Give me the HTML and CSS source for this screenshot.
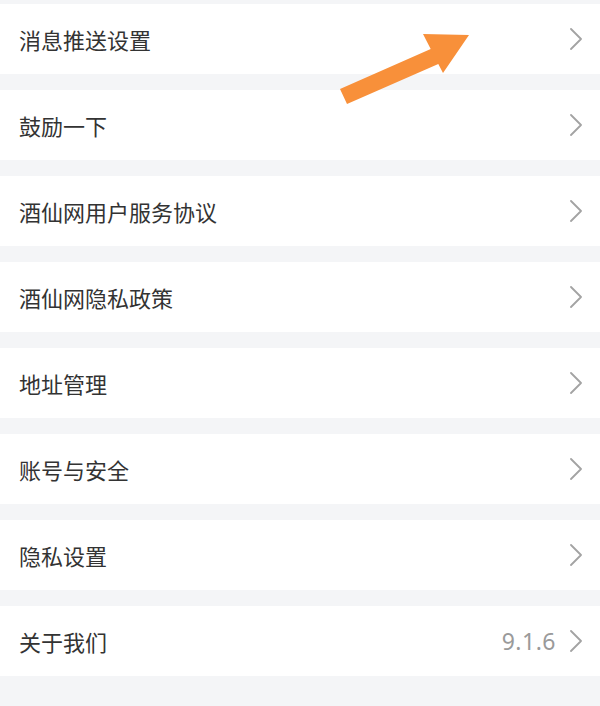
FILE: index.html
```html
<!DOCTYPE html>
<html lang="zh-CN">
<head>
<meta charset="utf-8">
<title>设置</title>
<link rel="stylesheet" href="styles.css">
</head>
<body>
<div class="page">
  <ul class="menu">
    <li class="row"><span class="label">消息推送设置</span><span class="right"><svg class="chev" viewBox="0 0 12 22"><polyline points="1,1 11,11 1,21"/></svg></span></li>
    <li class="row"><span class="label">鼓励一下</span><span class="right"><svg class="chev" viewBox="0 0 12 22"><polyline points="1,1 11,11 1,21"/></svg></span></li>
    <li class="row"><span class="label">酒仙网用户服务协议</span><span class="right"><svg class="chev" viewBox="0 0 12 22"><polyline points="1,1 11,11 1,21"/></svg></span></li>
    <li class="row"><span class="label">酒仙网隐私政策</span><span class="right"><svg class="chev" viewBox="0 0 12 22"><polyline points="1,1 11,11 1,21"/></svg></span></li>
    <li class="row"><span class="label">地址管理</span><span class="right"><svg class="chev" viewBox="0 0 12 22"><polyline points="1,1 11,11 1,21"/></svg></span></li>
    <li class="row"><span class="label">账号与安全</span><span class="right"><svg class="chev" viewBox="0 0 12 22"><polyline points="1,1 11,11 1,21"/></svg></span></li>
    <li class="row"><span class="label">隐私设置</span><span class="right"><svg class="chev" viewBox="0 0 12 22"><polyline points="1,1 11,11 1,21"/></svg></span></li>
    <li class="row"><span class="label">关于我们</span><span class="right"><span class="version">9.1.6</span><svg class="chev" viewBox="0 0 12 22"><polyline points="1,1 11,11 1,21"/></svg></span></li>
  </ul>
  <svg class="arrow" viewBox="0 0 600 706" width="600" height="706">
    <polygon points="340,89 430.7,49.1 423,34 469,35 443,73 438.3,63.9 347,104"/>
  </svg>
</div>
</body>
</html>
```

FILE: styles.css
```css
html, body {
  margin: 0;
  padding: 0;
  background: #f4f5f7;
}
body {
  font-family: "Noto Sans CJK SC", "Noto Sans", sans-serif;
  width: 600px;
  height: 706px;
  overflow: hidden;
}
.page {
  position: relative;
  width: 600px;
  height: 706px;
}
.menu {
  list-style: none;
  margin: 0;
  padding: 4px 0 0 0;
  display: flex;
  flex-direction: column;
  gap: 16px;
}
.row {
  height: 70px;
  background: #ffffff;
  display: flex;
  align-items: center;
  justify-content: space-between;
  padding: 0 18px 0 19px;
}
.label {
  font-size: 22px;
  color: #333333;
  line-height: 1;
}
.right {
  display: flex;
  align-items: center;
  gap: 14px;
}
.version {
  font-family: "Noto Sans", "Open Sans", sans-serif;
  font-size: 23px;
  color: #9a9a9a;
  line-height: 1;
  letter-spacing: 0.5px;
}
.chev {
  width: 12px;
  height: 22px;
  display: block;
}
.chev polyline {
  fill: none;
  stroke: #a3a3a3;
  stroke-width: 1.8;
  stroke-linecap: round;
  stroke-linejoin: round;
}
.arrow {
  position: absolute;
  left: 0;
  top: 0;
  pointer-events: none;
}
.arrow polygon {
  fill: #f8903a;
}
```
